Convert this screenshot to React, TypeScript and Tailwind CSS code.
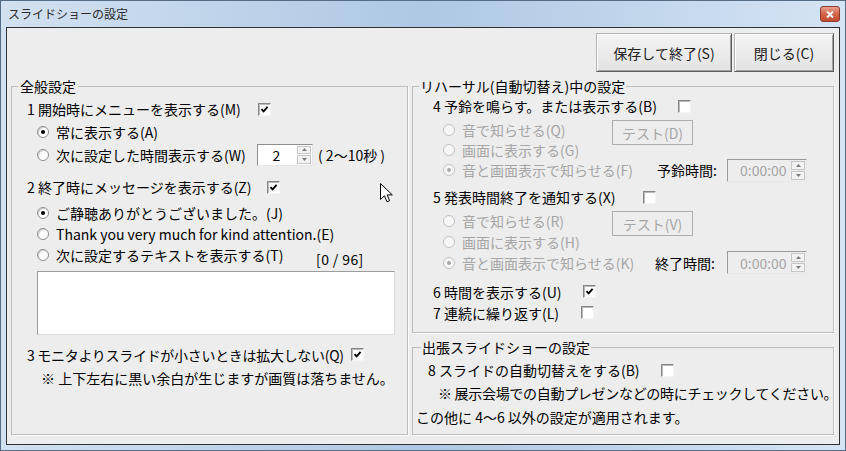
import React from 'react';

const FONT = "font-['Noto_Sans_CJK_JP','Noto_Sans',sans-serif]";

function Check({ checked }: { checked?: boolean }) {
  return (
    <span className="flex h-[13px] w-[13px] shrink-0 items-center justify-center border border-t-[#868686] border-l-[#868686] border-b-[#f4f4f4] border-r-[#f4f4f4] bg-white shadow-[inset_1px_1px_0_#b8b8b8]">
      {checked && (
        <svg width="9" height="9" viewBox="0 0 9 9">
          <path d="M1.5 4.2 L3.6 6.4 L7.6 1.8" fill="none" stroke="#000" strokeWidth="1.9" />
        </svg>
      )}
    </span>
  );
}

function Radio({ checked, disabled }: { checked?: boolean; disabled?: boolean }) {
  return (
    <span
      className={`flex h-[12px] w-[12px] shrink-0 items-center justify-center rounded-full border ${
        disabled ? 'border-[#c2c2c2] bg-[#f6f6f6]' : 'border-[#8c8c8c] bg-white shadow-[inset_1px_1px_0_#cfcfcf]'
      }`}
    >
      {checked && <span className={`h-[4px] w-[4px] rounded-full ${disabled ? 'bg-[#a8a8a8]' : 'bg-black'}`} />}
    </span>
  );
}

function Arrows() {
  return (
    <span className="flex h-full w-[15px] shrink-0 flex-col gap-px py-px pr-px">
      <span className="flex flex-1 items-center justify-center border border-[#c6c6c6] bg-[#f2f2f2]">
        <svg width="5" height="3" viewBox="0 0 5 3">
          <path d="M2.5 0 L5 3 L0 3 Z" fill="#7a7a7a" />
        </svg>
      </span>
      <span className="flex flex-1 items-center justify-center border border-[#c6c6c6] bg-[#f2f2f2]">
        <svg width="5" height="3" viewBox="0 0 5 3">
          <path d="M0 0 L5 0 L2.5 3 Z" fill="#7a7a7a" />
        </svg>
      </span>
    </span>
  );
}

function Button({ label, width }: { label: string; width: string }) {
  return (
    <div
      className={`flex h-[39px] ${width} items-center justify-center border border-t-[#b4b4b4] border-l-[#b4b4b4] border-b-[#5e5e5e] border-r-[#5e5e5e] bg-gradient-to-b from-[#f3f3f3] to-[#e3e3e3] text-[#222] shadow-[inset_1px_1px_0_#fff,inset_-1px_-1px_0_#a0a0a0]`}
    >
      {label}
    </div>
  );
}

function TestButton({ label }: { label: string }) {
  return (
    <div className="flex h-[25px] w-[81px] shrink-0 self-start items-center justify-center border border-[#adadad] text-[#a6a6a6]">
      {label}
    </div>
  );
}

function TimeSpin() {
  return (
    <div className="flex h-[23px] w-[80px] shrink-0 items-center border border-t-[#9a9a9a] border-l-[#9a9a9a] border-b-[#e8e8e8] border-r-[#e8e8e8] bg-[#ededed]">
      <span className="flex-1 pl-[12px] text-[#a6a6a6]">0:00:00</span>
      <Arrows />
    </div>
  );
}

function RadioRow({
  label,
  checked,
  disabled,
  h = 'h-[20px]',
  pl = 'pl-[25px]',
}: {
  label: string;
  checked?: boolean;
  disabled?: boolean;
  h?: string;
  pl?: string;
}) {
  return (
    <div className={`flex ${h} items-center ${pl}`}>
      <Radio checked={checked} disabled={disabled} />
      <span className={`ml-[7px] whitespace-nowrap ${disabled ? 'text-[#a6a6a6]' : ''}`}>{label}</span>
    </div>
  );
}

export default function App() {
  return (
    <div
      className={`relative flex h-[451px] w-[846px] flex-col border border-[#566d86] bg-gradient-to-r from-[#d2e1f1] via-[#aec8e3] to-[#d5e4f4] text-[14px] leading-[16px] text-black ${FONT}`}
    >
      {/* title bar */}
      <div className="flex h-[26px] shrink-0 items-start justify-between pl-[7px] pr-[5px]">
        <span className="mt-[5px] text-[12px] leading-[16px] text-[#2a2a2a]">スライドショーの設定</span>
        <div className="mt-[5px] flex h-[16px] w-[20px] items-center justify-center rounded-[3px] border border-[#8c3a2c] bg-gradient-to-b from-[#e8a08c] via-[#d1654b] to-[#c24a2f]">
          <svg width="8" height="7" viewBox="0 0 8 7">
            <path d="M1 0.5 L7 6.5 M7 0.5 L1 6.5" stroke="#fff" strokeWidth="2" />
          </svg>
        </div>
      </div>

      {/* client area */}
      <div className="mx-[5px] flex h-[418px] shrink-0 flex-col border border-[#2e3338] bg-[#ededed]">
        <div className="flex justify-end gap-[2px] pr-[5px] pt-[5px]">
          <Button label="保存して終了(S)" width="w-[136px]" />
          <Button label="閉じる(C)" width="w-[100px]" />
        </div>

        <div className="mt-[6px] flex gap-[4px] pl-[4px]">
          {/* 全般設定 */}
          <fieldset className="h-[357px] w-[397px] min-w-0 border border-[#bdbdbd] shadow-[1px_1px_0_#fff]">
            <legend className="ml-[6px] px-[2px] leading-[16px]">全般設定</legend>
            <div className="mt-[4px] flex h-[22px] items-center pl-[15px]">
              <span className="w-[231px] whitespace-nowrap">1 開始時にメニューを表示する(M)</span>
              <Check checked />
            </div>
            <RadioRow label="常に表示する(A)" checked h="h-[23px]" />
            <div className="flex h-[23px] items-center pl-[25px]">
              <Radio />
              <span className="ml-[7px] w-[201px] whitespace-nowrap">次に設定した時間表示する(W)</span>
              <div className="flex h-[22px] w-[56px] items-center border border-t-[#8e8e8e] border-l-[#8e8e8e] border-b-[#e6e6e6] border-r-[#e6e6e6] bg-white">
                <span className="flex-1 pr-[2px] text-center">2</span>
                <Arrows />
              </div>
              <span className="ml-[5px] whitespace-nowrap">( 2〜10秒 )</span>
            </div>

            <div className="mt-[10px] flex h-[22px] items-center pl-[15px]">
              <span className="w-[240px] whitespace-nowrap">2 終了時にメッセージを表示する(Z)</span>
              <Check checked />
            </div>
            <RadioRow label="ご静聴ありがとうございました。(J)" checked h="h-[21px] mt-[4px]" />
            <RadioRow label="Thank you very much for kind attention.(E)" h="h-[21px]" />
            <div className="flex h-[21px] items-center pl-[25px]">
              <Radio />
              <span className="ml-[7px] w-[260px] whitespace-nowrap">次に設定するテキストを表示する(T)</span>
              <span className="mt-[8px] whitespace-nowrap tracking-[0.4px]">[0 / 96]</span>
            </div>
            <div className="ml-[25px] mt-[6px] h-[64px] w-[358px] border border-t-[#9c9c9c] border-l-[#9c9c9c] border-b-[#dcdcdc] border-r-[#dcdcdc] bg-white" />

            <div className="mt-[8px] flex h-[23px] items-center pl-[15px]">
              <span className="w-[324px] whitespace-nowrap tracking-[-0.3px]">3 モニタよりスライドが小さいときは拡大しない(Q)</span>
              <Check checked />
            </div>
            <div className="flex h-[23px] items-center whitespace-nowrap pl-[29px]">
              ※ 上下左右に黒い余白が生じますが画質は落ちません。
            </div>
          </fieldset>

          <div className="flex w-[422px] flex-col">
            {/* リハーサル */}
            <fieldset className="h-[255px] min-w-0 border border-[#bdbdbd] shadow-[1px_1px_0_#fff]">
              <legend className="ml-[6px] px-[1px] leading-[16px]">リハーサル(自動切替え)中の設定</legend>
              <div className="mt-[2px] flex h-[20px] items-center pl-[20px]">
                <span className="w-[245px] whitespace-nowrap">4 予鈴を鳴らす。または表示する(B)</span>
                <Check />
              </div>
              <div className="mt-[4px] flex h-[20px] items-center pl-[30px]">
                <Radio disabled />
                <span className="ml-[7px] w-[150px] whitespace-nowrap text-[#a6a6a6]">音で知らせる(Q)</span>
                <TestButton label="テスト(D)" />
              </div>
              <RadioRow label="画面に表示する(G)" disabled pl="pl-[30px]" />
              <div className="flex h-[20px] items-center pl-[30px]">
                <Radio checked disabled />
                <span className="ml-[7px] w-[195px] whitespace-nowrap text-[#a6a6a6]">音と画面表示で知らせる(F)</span>
                <span className="w-[70px] whitespace-nowrap">予鈴時間:</span>
                <TimeSpin />
              </div>

              <div className="mt-[7px] flex h-[20px] items-center pl-[20px]">
                <span className="w-[210px] whitespace-nowrap">5 発表時間終了を通知する(X)</span>
                <Check />
              </div>
              <div className="mt-[4px] flex h-[20px] items-center pl-[30px]">
                <Radio disabled />
                <span className="ml-[7px] w-[150px] whitespace-nowrap text-[#a6a6a6]">音で知らせる(R)</span>
                <TestButton label="テスト(V)" />
              </div>
              <RadioRow label="画面に表示する(H)" disabled pl="pl-[30px]" h="h-[21px]" />
              <div className="flex h-[21px] items-center pl-[30px]">
                <Radio checked disabled />
                <span className="ml-[7px] w-[193px] whitespace-nowrap text-[#a6a6a6]">音と画面表示で知らせる(K)</span>
                <span className="w-[72px] whitespace-nowrap">終了時間:</span>
                <TimeSpin />
              </div>

              <div className="mt-[8px] flex h-[21px] items-center pl-[20px]">
                <span className="w-[150px] whitespace-nowrap">6 時間を表示する(U)</span>
                <Check checked />
              </div>
              <div className="flex h-[21px] items-center pl-[20px]">
                <span className="w-[148px] whitespace-nowrap">7 連続に繰り返す(L)</span>
                <Check />
              </div>
            </fieldset>

            {/* 出張スライドショー */}
            <fieldset className="mt-[6px] h-[96px] min-w-0 border border-[#bdbdbd] shadow-[1px_1px_0_#fff]">
              <legend className="ml-[8px] px-[1px] leading-[16px]">出張スライドショーの設定</legend>
              <div className="mt-[5px] flex h-[20px] items-center pl-[15px]">
                <span className="w-[233px] whitespace-nowrap">8 スライドの自動切替えをする(B)</span>
                <Check />
              </div>
              <div className="mt-[3px] flex h-[20px] items-center whitespace-nowrap pl-[25px] tracking-[-0.3px]">
                ※ 展示会場での自動プレゼンなどの時にチェックしてください。
              </div>
              <div className="mt-[4px] flex h-[20px] items-center whitespace-nowrap pl-[3px]">
                この他に 4〜6 以外の設定が適用されます。
              </div>
            </fieldset>
          </div>
        </div>
      </div>

      {/* mouse pointer */}
      <svg className="absolute left-[379px] top-[182px]" width="14" height="21" viewBox="0 0 14 21">
        <path
          d="M0.5 0.5 L0.5 16.5 L4.4 12.8 L7 18.8 L9.6 17.7 L7.1 11.9 L12.3 11.9 Z"
          fill="#fff"
          stroke="#000"
          strokeWidth="1"
          strokeLinejoin="round"
        />
      </svg>
    </div>
  );
}
